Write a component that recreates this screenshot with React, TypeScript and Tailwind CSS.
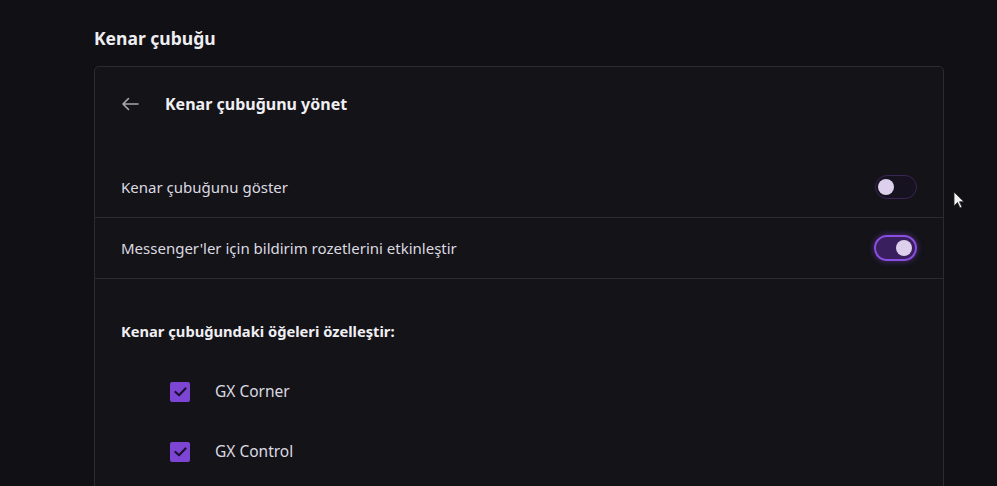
import React, { useState } from 'react';

const Toggle = ({ on, onClick }: { on: boolean; onClick: () => void }) => (
  <button
    onClick={onClick}
    className={
      on
        ? 'relative w-[43px] h-[26px] rounded-full border-2 border-[#8a4fe0] bg-[#3a1f5e] shadow-[0_0_6px_rgba(138,79,224,0.5)]'
        : 'relative w-[42px] h-[24px] rounded-full border border-[#3a2458] bg-[#17121f]'
    }
  >
    <span
      className={
        on
          ? 'absolute right-[3px] top-1/2 -translate-y-1/2 w-[16px] h-[16px] rounded-full bg-[#ddd0ec]'
          : 'absolute left-[2px] top-1/2 -translate-y-1/2 w-[16px] h-[16px] rounded-full bg-[#ddd0ec]'
      }
    />
  </button>
);

const Check = () => (
  <span className="w-[20px] h-[20px] rounded-[2px] bg-[#7c45d4] flex items-center justify-center">
    <svg width="13" height="10" viewBox="0 0 13 10" fill="none">
      <path d="M1.5 5 L5 8.2 L11.5 1.5" stroke="#1b1030" strokeWidth="2.2" strokeLinecap="round" strokeLinejoin="round" />
    </svg>
  </span>
);

export default function App() {
  const [showBar, setShowBar] = useState(false);
  const [badges, setBadges] = useState(true);

  return (
    <div
      className="w-[997px] h-[486px] overflow-hidden bg-[#111015] text-[#e6e4ea] relative"
      style={{ fontFamily: '"Noto Sans", "Open Sans", sans-serif' }}
    >
      <div className="pl-[94px] pr-[53px]">
        <h1 className="pt-[26px] text-[17.5px] font-bold leading-[25px] text-[#eeeef2]">Kenar çubuğu</h1>

        <div className="mt-[15px] w-[850px] rounded-[5px] border border-[#2c2b31] bg-[#141318]">
          <div className="flex items-center h-[72px] pl-[26px] pt-[1px]">
            <svg width="18" height="14" viewBox="0 0 18 14" fill="none">
              <path d="M17 7 H2 M7.5 1.5 L2 7 L7.5 12.5" stroke="#a9a8ae" strokeWidth="1.6" strokeLinecap="round" strokeLinejoin="round" />
            </svg>
            <span className="ml-[26px] text-[16px] font-bold text-[#f0eff3]">Kenar çubuğunu yönet</span>
          </div>

          <div className="h-[18px]" />

          <div className="flex items-center justify-between h-[61px] px-[26px] border-b border-[#2c2b31]">
            <span className="text-[15px] text-[#dcdae1]">Kenar çubuğunu göster</span>
            <Toggle on={showBar} onClick={() => setShowBar(!showBar)} />
          </div>

          <div className="flex items-center justify-between h-[61px] px-[26px] border-b border-[#2c2b31]">
            <span className="text-[15px] text-[#dcdae1]">Messenger'ler için bildirim rozetlerini etkinleştir</span>
            <Toggle on={badges} onClick={() => setBadges(!badges)} />
          </div>

          <div className="pl-[26px] pt-[41px] text-[14.7px] font-bold text-[#f0eff3] leading-[22px]">
            Kenar çubuğundaki öğeleri özelleştir:
          </div>

          <div className="pl-[75px] pt-[40px] flex flex-col gap-[40px] pb-[60px]">
            {['GX Corner', 'GX Control'].map((label) => (
              <div key={label} className="flex items-center h-[20px]">
                <Check />
                <span className="ml-[25px] text-[15.5px] text-[#dcdae1]">{label}</span>
              </div>
            ))}
          </div>
        </div>
      </div>

      <svg className="absolute left-[953px] top-[191px]" width="12" height="18" viewBox="0 0 12 18">
        <path d="M1 1 L1 15 L4.5 11.5 L7 17 L9 16 L6.5 10.8 L11 10.8 Z" fill="#f2f2f2" stroke="#222" strokeWidth="0.8" />
      </svg>
    </div>
  );
}
